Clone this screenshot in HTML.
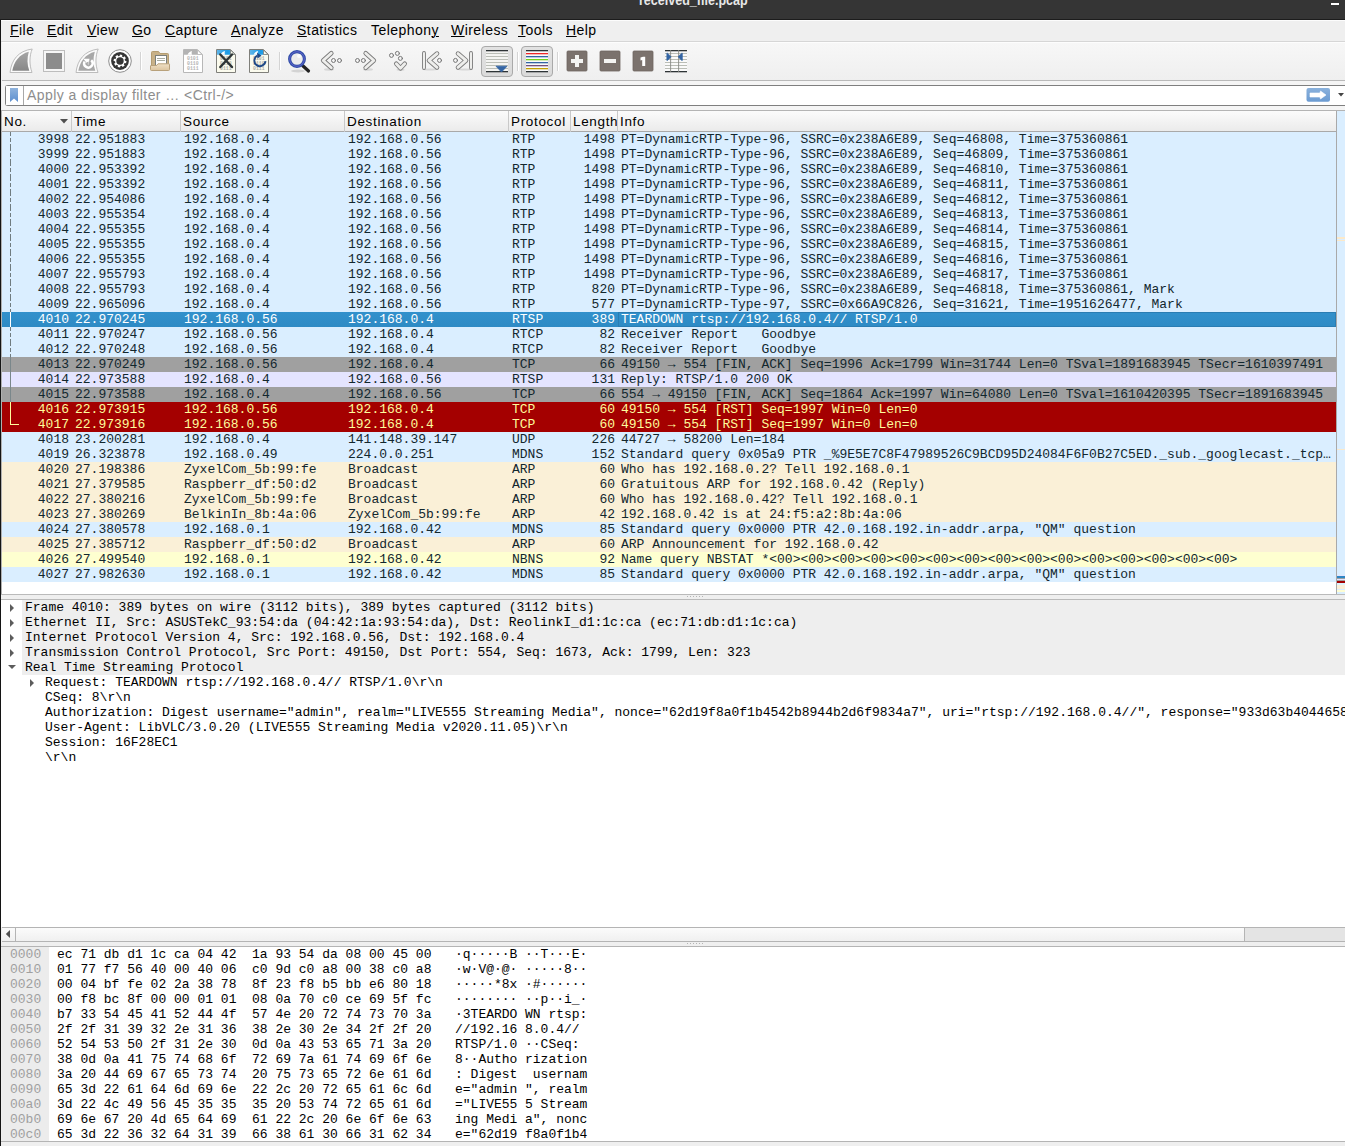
<!DOCTYPE html><html><head><meta charset="utf-8"><style>*{box-sizing:border-box;margin:0;padding:0}
html,body{width:1345px;height:1146px;overflow:hidden}
body{position:relative;background:#efefef;font-family:"Liberation Sans",sans-serif;color:#000}
.abs{position:absolute}
#titlebar{position:absolute;left:0;top:0;width:1345px;height:20px;background:#353535;border-bottom:1px solid #1c1c1c;overflow:hidden}
#title{position:absolute;left:639px;top:-9px;font:bold 15px "Liberation Sans",sans-serif;color:#e8e8e8;white-space:nowrap;letter-spacing:0px;transform:scaleX(0.835);transform-origin:0 0}
#minbtn{position:absolute;left:1331px;top:3px;width:8px;height:2px;background:#fff}
#leftedge{position:absolute;left:0;top:20px;width:1px;height:1126px;background:#141414}
#leftw{position:absolute;left:1px;top:20px;width:1px;height:1126px;background:#fbfbfb}
#menubar{position:absolute;left:1px;top:20px;width:1344px;height:22px;background:#efefef;border-top:1px solid #fcfcfc;border-bottom:1px solid #d6d6d6}
.mi{position:absolute;top:1px;font-size:14px;letter-spacing:0.45px;color:#000;white-space:nowrap}
.mi u{text-decoration:underline;text-decoration-thickness:1px;text-underline-offset:0.5px}
#toolbar{position:absolute;left:2px;top:42px;width:1343px;height:39px;background:linear-gradient(#f7f7f7,#efefef);border-top:1px solid #fdfdfd;border-bottom:1px solid #b9b9b9}
.sep{position:absolute;width:1px;height:18px;background:#d0d0d0;border-right:1px solid #fff}
#filterbar{position:absolute;left:2px;top:81px;width:1343px;height:29px;background:#f5f5f5}
#fbox{position:absolute;left:5px;top:85px;width:1340px;height:21px;background:#fff;border:1px solid #7f7f7f;border-right:none;border-radius:3px 0 0 3px}
#fbm{position:absolute;left:6px;top:86px;width:18px;height:19px;border-right:1px solid #a8a8a8;background:#fff}
#fph{position:absolute;left:27px;top:87px;font-size:14px;letter-spacing:0.43px;color:#8d8d8d;white-space:nowrap}
#plframe{position:absolute;left:1px;top:110px;width:1344px;height:485px;background:#fff;border-top:1px solid #b4b4b4;border-bottom:1px solid #bababa;border-left:1px solid #b0b0b0}
#phead{position:absolute;left:2px;top:111px;width:1334px;height:21px;background:linear-gradient(#fbfbfb,#ebebeb);border-bottom:1px solid #a9a9a9}
.hc{position:absolute;top:0;height:21px;border-right:1px solid #c9c9c9;font-size:13.5px;letter-spacing:0.66px;line-height:21px;padding-left:2px;white-space:nowrap;overflow:hidden;color:#000}
#plist{position:absolute;left:2px;top:132px;width:1334px;height:450px;overflow:hidden;font-family:"Liberation Mono",monospace;font-size:13px}
.row{position:absolute;left:0;width:1334px;height:15px;line-height:15px;color:#12272e;white-space:nowrap}
.row .c{position:absolute;top:0;white-space:pre;overflow:hidden}
.udp{background:#daeeff}
.sel{background:linear-gradient(#3291cc,#2e8ac4);color:#fff}
.fin{background:#a0a0a0}
.rtspc{background:#e4e4ff}
.rst{background:#a40000;color:#fffc9c}
.arp{background:#faf0d7}
.nbns{background:#feffd0}
.c.no{left:0;width:67px;text-align:right}
.c.tm{left:73px}
.c.src{left:182px}
.c.dst{left:346px}
.c.pr{left:510px}
.c.ln{left:568px;width:45px;text-align:right}
.c.info{left:619px;width:712px;text-overflow:ellipsis}
#vscroll{position:absolute;left:1336px;top:111px;width:9px;height:483px;background:#daeeff;border-left:1px solid #a9a9a9}
#splitter1{position:absolute;left:1px;top:594px;width:1344px;height:6px;background:#efefef;border-top:1px solid #bababa;border-bottom:1px solid #bababa}
#dpane{position:absolute;left:1px;top:600px;width:1344px;height:327px;background:#fff}
#dtree{position:absolute;left:2px;top:600px;width:1343px;height:327px;overflow:hidden;font-family:"Liberation Mono",monospace;font-size:13px}
.drow{position:absolute;left:0;width:1343px;height:15px;line-height:15px;white-space:pre;color:#000}
.drow.top{background:#eeeeee;left:20px}
.drow.top .dt{position:absolute;left:3px}
.drow.child .dt{position:absolute;left:43px}
.tri{position:absolute;width:0;height:0}
.top .tri.r{left:-12px;top:4px;border-left:4px solid #5c5c5c;border-top:4px solid transparent;border-bottom:4px solid transparent}
.top .tri.d{left:-14px;top:5px;border-top:4px solid #5c5c5c;border-left:4px solid transparent;border-right:4px solid transparent}
.child .tri.r{left:28px;top:4px;border-left:4px solid #5c5c5c;border-top:4px solid transparent;border-bottom:4px solid transparent}
#hscroll{position:absolute;left:2px;top:927px;width:1343px;height:15px;background:#e4e4e4;border-top:1px solid #b4b4b4;border-bottom:1px solid #b4b4b4}
#hthumb{position:absolute;left:15px;top:928px;width:1230px;height:13px;background:linear-gradient(#fbfbfb,#f0f0f0);border-left:1px solid #b4b4b4;border-right:1px solid #b4b4b4}
#harrow{position:absolute;left:2px;top:928px;width:13px;height:13px;background:linear-gradient(#fbfbfb,#f0f0f0)}
#splitter2{position:absolute;left:1px;top:942px;width:1344px;height:5px;background:#efefef;border-bottom:1px solid #b4b4b4}
#hexp{position:absolute;left:2px;top:947px;width:1343px;height:194px;background:#fff;overflow:hidden;font-family:"Liberation Mono",monospace;font-size:13px}
.offcol{position:absolute;left:0;top:0;width:47px;height:195px;background:#ececec}
.hrow{position:absolute;left:0;height:15px;line-height:15px;white-space:nowrap;color:#000;width:1343px}
.hrow span{position:absolute;top:0;white-space:pre}
.off{left:8px;color:#a0a0a0}
.h1{left:55px}
.h2{left:250px}
.a1{left:453px}
.a2{left:523px}
#bottomstrip{position:absolute;left:1px;top:1141px;width:1344px;height:5px;background:#efefef;border-top:1px solid #b4b4b4}
.tl{position:absolute;left:8px;top:0;width:1px;height:15px}
.tl.dash{background:repeating-linear-gradient(to bottom,#707c80 0,#707c80 4px,transparent 4px,transparent 6px,#707c80 6px,#707c80 10px,transparent 10px,transparent 12px,#707c80 12px,#707c80 15px)}
.tl.solid{background:#7a878b}
.tl.lend{height:8px;width:9px;border-left:1px solid #fffc9c;border-bottom:1px solid #fffc9c}
.focus{position:absolute;left:616px;top:0;width:718px;height:15px;border:1px solid #2a7db3}
</style></head><body>
<div id="titlebar"><div id="title">received_file.pcap</div><div id="minbtn"></div></div>
<div id="menubar">
<span class="mi" style="left:9px"><u>F</u>ile</span>
<span class="mi" style="left:46px"><u>E</u>dit</span>
<span class="mi" style="left:86px"><u>V</u>iew</span>
<span class="mi" style="left:131px"><u>G</u>o</span>
<span class="mi" style="left:164px"><u>C</u>apture</span>
<span class="mi" style="left:230px"><u>A</u>nalyze</span>
<span class="mi" style="left:296px"><u>S</u>tatistics</span>
<span class="mi" style="left:370px">Telephon<u>y</u></span>
<span class="mi" style="left:450px"><u>W</u>ireless</span>
<span class="mi" style="left:517px"><u>T</u>ools</span>
<span class="mi" style="left:565px"><u>H</u>elp</span>
</div>
<div id="leftedge"></div>
<div id="toolbar"></div>
<svg id="tbsvg" style="position:absolute;left:0;top:0" width="700" height="82" viewBox="0 0 700 82">
<defs>
<linearGradient id="finL" x1="0" y1="0" x2="0" y2="1"><stop offset="0" stop-color="#a6a6a6"/><stop offset="1" stop-color="#878787"/></linearGradient>
<linearGradient id="btnG" x1="0" y1="0" x2="0" y2="1"><stop offset="0" stop-color="#e2e2e2"/><stop offset="1" stop-color="#dadada"/></linearGradient>
<linearGradient id="fold1" x1="0" y1="0" x2="0" y2="1"><stop offset="0" stop-color="#efe0c6"/><stop offset="1" stop-color="#dcc49e"/></linearGradient>
<linearGradient id="blueband" x1="0" y1="0" x2="1" y2="0"><stop offset="0" stop-color="#5fb5e8"/><stop offset="0.6" stop-color="#1c9be6"/><stop offset="1" stop-color="#3aa8e8"/></linearGradient>
<linearGradient id="arrowbtn" x1="0" y1="0" x2="0" y2="1"><stop offset="0" stop-color="#86afdc"/><stop offset="1" stop-color="#6f9fd4"/></linearGradient>
</defs>
<!-- fin 1 -->
<path d="M10,72.5 C11.5,60 18,51 32.2,49 C29.5,55.5 29,64 32,72.5 Z" fill="#fbfbfb" stroke="#bcbcbc" stroke-width="1"/>
<path d="M12.3,70.8 C14,61.5 19.5,54 28.8,51.7 C27,58 27,64.5 29.3,70.8 Z" fill="url(#finL)"/>
<!-- stop -->
<rect x="43.5" y="50.5" width="21" height="21" fill="#f6f6f6" stroke="#bdbdbd"/>
<rect x="46" y="53" width="16" height="16" fill="#8c8c8c"/>
<!-- fin 2 restart -->
<path d="M76,72.5 C77.5,60 84,51 98.2,49 C95.5,55.5 95,64 98,72.5 Z" fill="#fbfbfb" stroke="#bcbcbc" stroke-width="1"/>
<path d="M78.3,70.8 C80,61.5 85.5,54 94.8,51.7 C93,58 93,64.5 95.3,70.8 Z" fill="#a8a8a8"/>
<path d="M84.6,61.5 A4.2,4.2 0 1 0 91.2,60.2" fill="none" stroke="#fff" stroke-width="2.5"/>
<path d="M83.3,58.8 L89.5,58.8 L88.6,65.2 Z" fill="#fff"/>
<path d="M86.6,62.6 L88.4,65.8 L88.6,61.6 Z" fill="#a8a8a8"/>
<!-- gear -->
<circle cx="120" cy="61" r="11.3" fill="#fff" stroke="#8e8e8e" stroke-width="1"/>
<circle cx="120" cy="61" r="8.9" fill="#353535"/>
<path d="M124.99,60.65 L126.50,60.89 L126.07,63.33 L124.57,63.03 L123.77,64.28 L124.68,65.52 L122.64,66.94 L121.79,65.67 L120.35,65.99 L120.11,67.50 L117.67,67.07 L117.97,65.57 L116.72,64.77 L115.48,65.68 L114.06,63.64 L115.33,62.79 L115.01,61.35 L113.50,61.11 L113.93,58.67 L115.43,58.97 L116.23,57.72 L115.32,56.48 L117.36,55.06 L118.21,56.33 L119.65,56.01 L119.89,54.50 L122.33,54.93 L122.03,56.43 L123.28,57.23 L124.52,56.32 L125.94,58.36 L124.67,59.21 Z" fill="#fff"/>
<circle cx="120" cy="61" r="3.7" fill="#353535"/>
<!-- sep -->
<rect x="140" y="52" width="1" height="18" fill="#d4d4d4"/><rect x="141" y="52" width="1" height="18" fill="#fff"/>
<!-- folder -->
<path d="M151.5,66 L151.5,52.5 Q151.5,51.5 152.5,51.5 L158.5,51.5 L160,53.5 L167.5,53.5 Q168.5,53.5 168.5,54.5 L168.5,66 Z" fill="#c8b188" stroke="#b49d72"/>
<rect x="155.5" y="55.5" width="11" height="10" fill="#fff" stroke="#7b7f7b"/>
<rect x="157" y="58" width="8" height="1" fill="#a8aca0"/><rect x="157" y="60" width="8" height="1" fill="#a8aca0"/>
<path d="M150.5,69.5 L150.5,66 Q150.5,65.5 151,65.5 L156.5,65.5 L158,63.8 L169,63.8 Q169.5,63.8 169.5,64.3 L169.5,69.5 Q169.5,70.5 168.5,70.5 L151.5,70.5 Q150.5,70.5 150.5,69.5 Z" fill="url(#fold1)" stroke="#b8a17b"/>
<!-- file gray -->
<path d="M183.5,49.5 L197.5,49.5 L202.5,54.5 L202.5,72.5 L183.5,72.5 Z" fill="#fff" stroke="#b7b7b7"/>
<path d="M184,50 L197.3,50 L201.8,54.8 L184,54.8 Z" fill="#b3b3b3"/>
<path d="M187.5,54.8 C188.5,52.5 190,51.3 192,51 C191.5,52.5 191.6,53.5 192,54.8 Z" fill="#fff"/>
<path d="M197.5,50 L197.5,54.5 L202,54.5 Z" fill="#fff" stroke="#b7b7b7" stroke-width="0.8"/>
<g fill="#b4b4b4" font-family="Liberation Mono" font-size="4.8" font-weight="bold"><text x="187" y="60">0101</text><text x="187" y="65">0110</text><text x="187" y="70">0111</text></g>
<!-- file close -->
<path d="M216.5,49.5 L230.5,49.5 L235.5,54.5 L235.5,72.5 L216.5,72.5 Z" fill="#fbfbee" stroke="#7f7f7a"/>
<path d="M217,50 L230.3,50 L234.8,54.8 L217,54.8 Z" fill="url(#blueband)"/>
<path d="M220.5,54.8 C221.5,52.5 223,51.3 225,51 C224.5,52.5 224.6,53.5 225,54.8 Z" fill="#fff"/>
<path d="M230.5,50 L230.5,54.5 L235,54.5 Z" fill="#fbfbee" stroke="#7f7f7a" stroke-width="0.8"/>
<g fill="#aeaea6" font-family="Liberation Mono" font-size="4.8" font-weight="bold"><text x="220" y="60">0101</text><text x="220" y="65">0110</text><text x="220" y="70">0111</text></g>
<path d="M220.3,54.5 L232,67 M232,54.5 L220.3,67" stroke="#2e3436" stroke-width="2.4" stroke-linecap="round"/>
<!-- file reload -->
<path d="M249.5,49.5 L263.5,49.5 L268.5,54.5 L268.5,72.5 L249.5,72.5 Z" fill="#fbfbee" stroke="#7f7f7a"/>
<path d="M250,50 L263.3,50 L267.8,54.8 L250,54.8 Z" fill="url(#blueband)"/>
<path d="M253.5,54.8 C254.5,52.5 256,51.3 258,51 C257.5,52.5 257.6,53.5 258,54.8 Z" fill="#fff"/>
<path d="M263.5,50 L263.5,54.5 L268,54.5 Z" fill="#fbfbee" stroke="#7f7f7a" stroke-width="0.8"/>
<g fill="#aeaea6" font-family="Liberation Mono" font-size="4.8" font-weight="bold"><text x="253" y="60">0101</text><text x="253" y="65">0110</text><text x="253" y="70">0111</text></g>
<path d="M257.5,55.5 A5.6,5.6 0 1 0 265.5,61.2" fill="none" stroke="#204a87" stroke-width="1.9"/>
<path d="M257,52.8 L261.5,55.5 L257.5,58.5 Z" fill="#204a87"/>
<!-- sep -->
<rect x="279" y="52" width="1" height="18" fill="#d4d4d4"/><rect x="280" y="52" width="1" height="18" fill="#fff"/>
<!-- magnifier -->
<ellipse cx="298" cy="71" rx="7" ry="1.5" fill="#000" opacity="0.12"/>
<path d="M302.8,65.8 L308.5,71" stroke="#222" stroke-width="3.2" stroke-linecap="round"/>
<circle cx="297" cy="59" r="7.4" fill="#ececec" stroke="#2f4ea6" stroke-width="3.1"/>
<circle cx="297" cy="59" r="7.3" fill="none" stroke="#6d68d6" stroke-width="0.9" opacity="0.9"/>
<circle cx="299" cy="56" r="2" fill="#fff" opacity="0.8"/>
<!-- back --><g fill="#000" opacity="0.10"><ellipse cx="329" cy="69.5" rx="5" ry="1.2"/><ellipse cx="368" cy="69.5" rx="5" ry="1.2"/><ellipse cx="400.5" cy="69.8" rx="4" ry="1.1"/><ellipse cx="430" cy="69.5" rx="7" ry="1.1"/><ellipse cx="465" cy="69.5" rx="7" ry="1.1"/></g>
<g fill="none" stroke-linecap="round" stroke-linejoin="round">
<path d="M331.3,53.3 L323.2,60.5 L331.3,67.7" stroke="#7a7a7a" stroke-width="4.6"/>
<path d="M331.3,53.3 L323.2,60.5 L331.3,67.7" stroke="#eeeeec" stroke-width="2.8"/>
<circle cx="333.5" cy="60.5" r="2" stroke="#777" stroke-width="1"/>
<circle cx="339.5" cy="60.5" r="2" stroke="#777" stroke-width="1"/>
<!-- forward -->
<path d="M365.7,53.3 L373.8,60.5 L365.7,67.7" stroke="#7a7a7a" stroke-width="4.6"/>
<path d="M365.7,53.3 L373.8,60.5 L365.7,67.7" stroke="#eeeeec" stroke-width="2.8"/>
<circle cx="363.4" cy="60.5" r="2" stroke="#777" stroke-width="1"/>
<circle cx="357.5" cy="60.5" r="2" stroke="#777" stroke-width="1"/>
<!-- goto -->
<circle cx="391.5" cy="55.4" r="2" stroke="#777" stroke-width="1"/>
<circle cx="397.4" cy="53.4" r="2" stroke="#777" stroke-width="1"/>
<circle cx="400.4" cy="58.4" r="2" stroke="#777" stroke-width="1"/>
<path d="M396.3,63.8 L400.5,68.3 L404.7,63.8" stroke="#7a7a7a" stroke-width="4.6"/>
<path d="M396.3,63.8 L400.5,68.3 L404.7,63.8" stroke="#eeeeec" stroke-width="2.8"/>
<!-- first -->
<path d="M424,53 L424,68" stroke="#7a7a7a" stroke-width="3.8"/>
<path d="M424,53 L424,68" stroke="#eeeeec" stroke-width="2"/>
<path d="M437,53.6 L429,60.4 L437,67.4" stroke="#7a7a7a" stroke-width="4.6"/>
<path d="M437,53.6 L429,60.4 L437,67.4" stroke="#eeeeec" stroke-width="2.8"/>
<circle cx="439.5" cy="60.4" r="2" stroke="#777" stroke-width="1"/>
<!-- last -->
<path d="M471,53 L471,68" stroke="#7a7a7a" stroke-width="3.8"/>
<path d="M471,53 L471,68" stroke="#eeeeec" stroke-width="2"/>
<path d="M458,53.6 L466,60.4 L458,67.4" stroke="#7a7a7a" stroke-width="4.6"/>
<path d="M458,53.6 L466,60.4 L458,67.4" stroke="#eeeeec" stroke-width="2.8"/>
<circle cx="455.5" cy="60.4" r="2" stroke="#777" stroke-width="1"/>
</g>
<!-- autoscroll button -->
<rect x="481.5" y="46.5" width="31" height="30" rx="3.5" fill="url(#btnG)" stroke="#a9a9a9"/>
<rect x="486" y="50" width="22" height="22" fill="#f4f4f2"/>
<g fill="#babdb6"><rect x="486" y="53" width="22" height="1"/><rect x="486" y="56" width="22" height="1"/><rect x="486" y="59" width="22" height="1"/><rect x="486" y="62" width="22" height="1"/><rect x="486" y="65" width="22" height="1"/><rect x="486" y="68" width="22" height="1"/></g>
<rect x="486" y="50" width="22" height="1.3" fill="#2e3436"/><rect x="486" y="71" width="22" height="1.3" fill="#2e3436"/>
<path d="M496,66.2 L507,66.2 L501.5,72 Z" fill="#3465a4" stroke="#3465a4" stroke-width="0.8" stroke-linejoin="round"/>
<rect x="517" y="52" width="1" height="19" fill="#d4d4d4"/><rect x="518" y="52" width="1" height="19" fill="#fff"/>
<!-- colorize button -->
<rect x="521.5" y="46.5" width="31" height="30" rx="3.5" fill="url(#btnG)" stroke="#a9a9a9"/>
<rect x="526" y="50" width="22" height="22" fill="#fafafa"/>
<rect x="526" y="50" width="22" height="1.3" fill="#2e3436"/>
<rect x="526" y="53" width="22" height="1.3" fill="#ef2929"/>
<rect x="526" y="56" width="22" height="1.3" fill="#3465a4"/>
<rect x="526" y="59" width="22" height="1.3" fill="#73d216"/>
<rect x="526" y="62" width="22" height="1.3" fill="#3465a4"/>
<rect x="526" y="65" width="22" height="1.3" fill="#75507b"/>
<rect x="526" y="68" width="22" height="1.3" fill="#c4a000"/>
<rect x="526" y="71" width="22" height="1.3" fill="#2e3436"/>
<rect x="557" y="52" width="1" height="19" fill="#d4d4d4"/><rect x="558" y="52" width="1" height="19" fill="#fff"/>
<!-- zoom in/out/normal -->
<rect x="567" y="51" width="20" height="20" rx="1" fill="#7b726d" stroke="#6f6661" stroke-width="0.8"/>
<rect x="575" y="55" width="4" height="12" fill="#f4f4f2"/><rect x="571" y="59" width="12" height="4" fill="#f4f4f2"/>
<rect x="600" y="51" width="20" height="20" rx="1" fill="#7b726d" stroke="#6f6661" stroke-width="0.8"/>
<rect x="604" y="59" width="12" height="4" fill="#f4f4f2"/>
<rect x="633" y="51" width="20" height="20" rx="1" fill="#7b726d" stroke="#6f6661" stroke-width="0.8"/>
<path d="M640.5,57.5 L643,56.7 L645.2,56.7 L645.2,66 L642.2,66 L642.2,60 L640.5,60.5 Z" fill="#fff"/>
<!-- resize columns -->
<rect x="665" y="50" width="22" height="22" fill="#fafafa"/>
<g fill="#babdb6"><rect x="665" y="53" width="22" height="1"/><rect x="665" y="56" width="22" height="1"/><rect x="665" y="59" width="22" height="1"/><rect x="665" y="62" width="22" height="1"/><rect x="665" y="65" width="22" height="1"/><rect x="665" y="68" width="22" height="1"/></g>
<rect x="665" y="50" width="22" height="1.3" fill="#2e3436"/><rect x="665" y="71" width="22" height="1.3" fill="#2e3436"/>
<rect x="670.2" y="50" width="0.9" height="22" fill="#888a85"/><rect x="678.2" y="50" width="0.9" height="22" fill="#888a85"/>
<path d="M666.8,53.2 L667.5,53.2 L671.2,56.8 L667.5,60.4 L666.8,60.4 Z" fill="#3465a4" stroke="#3465a4" stroke-width="0.6" stroke-linejoin="round"/>
<path d="M682.4,53.2 L681.7,53.2 L678,56.8 L681.7,60.4 L682.4,60.4 Z" fill="#3465a4" stroke="#3465a4" stroke-width="0.6" stroke-linejoin="round"/>
</svg>


<div id="filterbar"></div>
<div id="fbox"></div><div id="fbm"></div>
<svg style="position:absolute;left:0;top:80px" width="1345" height="30" viewBox="0 80 1345 30">
<defs><linearGradient id="bmg" x1="0" y1="0" x2="0" y2="1"><stop offset="0" stop-color="#8fb3dd"/><stop offset="1" stop-color="#5d8fcf"/></linearGradient></defs>
<path d="M10,88 L18,88 L18,102 L14,98.5 L10,102 Z" fill="url(#bmg)"/>
<rect x="1306.5" y="88" width="23.5" height="13.8" rx="2" fill="url(#arrowbtn2)"/>
<linearGradient id="arrowbtn2" x1="0" y1="0" x2="0" y2="1"><stop offset="0" stop-color="#8ab1dc"/><stop offset="1" stop-color="#6b9bd2"/></linearGradient>
<path d="M1310,93 L1320,93 L1320.5,91 L1326,95 L1320.5,99 L1320,97 L1310,97 Z" fill="#fff" stroke="#fff" stroke-width="0.6" stroke-linejoin="round"/>
<path d="M1338,93 L1344,93 L1341,96.5 Z" fill="#444"/>
</svg>
<div id="fph">Apply a display filter … &lt;Ctrl-/&gt;</div>
<div id="plframe"></div>
<div id="phead">
<div class="hc" style="left:0;width:70px">No.<svg style="position:absolute;left:58px;top:8px" width="8" height="5"><path d="M0,0 L8,0 L4,4.5 Z" fill="#505050"/></svg></div>
<div class="hc" style="left:70px;width:109px">Time</div>
<div class="hc" style="left:179px;width:164px">Source</div>
<div class="hc" style="left:343px;width:164px">Destination</div>
<div class="hc" style="left:507px;width:62px">Protocol</div>
<div class="hc" style="left:569px;width:47px">Length</div>
<div class="hc" style="left:616px;width:718px;border-right:none">Info</div>
</div>
<div id="vscroll"></div><div style="position:absolute;left:1337px;top:237px;width:8px;height:2px;background:#fce9c9"></div><div style="position:absolute;left:1337px;top:240px;width:8px;height:1px;background:#fce9c9"></div><div style="position:absolute;left:1337px;top:449px;width:8px;height:1px;background:#fae9cc"></div><div style="position:absolute;left:1337px;top:575px;width:8px;height:1px;background:#e6e4fd"></div><div style="position:absolute;left:1337px;top:576px;width:8px;height:2px;background:#2f86c4"></div><div style="position:absolute;left:1337px;top:578px;width:8px;height:1px;background:#9aa0a3"></div><div style="position:absolute;left:1337px;top:579px;width:8px;height:1px;background:#e6e4fd"></div><div style="position:absolute;left:1337px;top:580px;width:8px;height:1px;background:#a0a0a0"></div><div style="position:absolute;left:1337px;top:581px;width:8px;height:2px;background:#a40000"></div><div style="position:absolute;left:1337px;top:583px;width:8px;height:2px;background:#dcf4ff"></div><div style="position:absolute;left:1337px;top:585px;width:8px;height:4px;background:#faefd8"></div><div style="position:absolute;left:1337px;top:589px;width:8px;height:1px;background:#daeeff"></div><div style="position:absolute;left:1337px;top:590px;width:8px;height:2px;background:#fdfdd3"></div><div style="position:absolute;left:1337px;top:592px;width:8px;height:1px;background:#daeeff"></div>
<div id="splitter1"></div>
<div id="dpane"></div>
<div id="hscroll"></div><div id="harrow"></div><div id="hthumb"></div>
<div id="splitter2"></div>
<svg style="position:absolute;left:0;top:590px" width="1345" height="360" viewBox="0 590 1345 360">
<path d="M10,930 L10,938 L5.8,934 Z" fill="#505050"/>
<g fill="#b4b4b4"><rect x="687" y="596" width="1" height="1"/><rect x="690" y="596" width="1" height="1"/><rect x="693" y="596" width="1" height="1"/><rect x="696" y="596" width="1" height="1"/><rect x="699" y="596" width="1" height="1"/><rect x="702" y="596" width="1" height="1"/>
<rect x="687" y="943" width="1" height="1"/><rect x="690" y="943" width="1" height="1"/><rect x="693" y="943" width="1" height="1"/><rect x="696" y="943" width="1" height="1"/><rect x="699" y="943" width="1" height="1"/><rect x="702" y="943" width="1" height="1"/></g>
</svg>
<div id="bottomstrip"></div>

<div id="plist">
<div class="row udp" style="top:0px"><i class="tl dash"></i><span class="c no">3998</span><span class="c tm">22.951883</span><span class="c src">192.168.0.4</span><span class="c dst">192.168.0.56</span><span class="c pr">RTP</span><span class="c ln">1498</span><span class="c info">PT=DynamicRTP-Type-96, SSRC=0x238A6E89, Seq=46808, Time=375360861</span></div>
<div class="row udp" style="top:15px"><i class="tl dash"></i><span class="c no">3999</span><span class="c tm">22.951883</span><span class="c src">192.168.0.4</span><span class="c dst">192.168.0.56</span><span class="c pr">RTP</span><span class="c ln">1498</span><span class="c info">PT=DynamicRTP-Type-96, SSRC=0x238A6E89, Seq=46809, Time=375360861</span></div>
<div class="row udp" style="top:30px"><i class="tl dash"></i><span class="c no">4000</span><span class="c tm">22.953392</span><span class="c src">192.168.0.4</span><span class="c dst">192.168.0.56</span><span class="c pr">RTP</span><span class="c ln">1498</span><span class="c info">PT=DynamicRTP-Type-96, SSRC=0x238A6E89, Seq=46810, Time=375360861</span></div>
<div class="row udp" style="top:45px"><i class="tl dash"></i><span class="c no">4001</span><span class="c tm">22.953392</span><span class="c src">192.168.0.4</span><span class="c dst">192.168.0.56</span><span class="c pr">RTP</span><span class="c ln">1498</span><span class="c info">PT=DynamicRTP-Type-96, SSRC=0x238A6E89, Seq=46811, Time=375360861</span></div>
<div class="row udp" style="top:60px"><i class="tl dash"></i><span class="c no">4002</span><span class="c tm">22.954086</span><span class="c src">192.168.0.4</span><span class="c dst">192.168.0.56</span><span class="c pr">RTP</span><span class="c ln">1498</span><span class="c info">PT=DynamicRTP-Type-96, SSRC=0x238A6E89, Seq=46812, Time=375360861</span></div>
<div class="row udp" style="top:75px"><i class="tl dash"></i><span class="c no">4003</span><span class="c tm">22.955354</span><span class="c src">192.168.0.4</span><span class="c dst">192.168.0.56</span><span class="c pr">RTP</span><span class="c ln">1498</span><span class="c info">PT=DynamicRTP-Type-96, SSRC=0x238A6E89, Seq=46813, Time=375360861</span></div>
<div class="row udp" style="top:90px"><i class="tl dash"></i><span class="c no">4004</span><span class="c tm">22.955355</span><span class="c src">192.168.0.4</span><span class="c dst">192.168.0.56</span><span class="c pr">RTP</span><span class="c ln">1498</span><span class="c info">PT=DynamicRTP-Type-96, SSRC=0x238A6E89, Seq=46814, Time=375360861</span></div>
<div class="row udp" style="top:105px"><i class="tl dash"></i><span class="c no">4005</span><span class="c tm">22.955355</span><span class="c src">192.168.0.4</span><span class="c dst">192.168.0.56</span><span class="c pr">RTP</span><span class="c ln">1498</span><span class="c info">PT=DynamicRTP-Type-96, SSRC=0x238A6E89, Seq=46815, Time=375360861</span></div>
<div class="row udp" style="top:120px"><i class="tl dash"></i><span class="c no">4006</span><span class="c tm">22.955355</span><span class="c src">192.168.0.4</span><span class="c dst">192.168.0.56</span><span class="c pr">RTP</span><span class="c ln">1498</span><span class="c info">PT=DynamicRTP-Type-96, SSRC=0x238A6E89, Seq=46816, Time=375360861</span></div>
<div class="row udp" style="top:135px"><i class="tl dash"></i><span class="c no">4007</span><span class="c tm">22.955793</span><span class="c src">192.168.0.4</span><span class="c dst">192.168.0.56</span><span class="c pr">RTP</span><span class="c ln">1498</span><span class="c info">PT=DynamicRTP-Type-96, SSRC=0x238A6E89, Seq=46817, Time=375360861</span></div>
<div class="row udp" style="top:150px"><i class="tl dash"></i><span class="c no">4008</span><span class="c tm">22.955793</span><span class="c src">192.168.0.4</span><span class="c dst">192.168.0.56</span><span class="c pr">RTP</span><span class="c ln">820</span><span class="c info">PT=DynamicRTP-Type-96, SSRC=0x238A6E89, Seq=46818, Time=375360861, Mark</span></div>
<div class="row udp" style="top:165px"><i class="tl dash"></i><span class="c no">4009</span><span class="c tm">22.965096</span><span class="c src">192.168.0.4</span><span class="c dst">192.168.0.56</span><span class="c pr">RTP</span><span class="c ln">577</span><span class="c info">PT=DynamicRTP-Type-97, SSRC=0x66A9C826, Seq=31621, Time=1951626477, Mark</span></div>
<div class="row sel" style="top:180px"><i class="tl solid" style="background:#fff"></i><i class="focus"></i><span class="c no">4010</span><span class="c tm">22.970245</span><span class="c src">192.168.0.56</span><span class="c dst">192.168.0.4</span><span class="c pr">RTSP</span><span class="c ln">389</span><span class="c info">TEARDOWN rtsp://192.168.0.4// RTSP/1.0</span></div>
<div class="row udp" style="top:195px"><i class="tl dash"></i><span class="c no">4011</span><span class="c tm">22.970247</span><span class="c src">192.168.0.56</span><span class="c dst">192.168.0.4</span><span class="c pr">RTCP</span><span class="c ln">82</span><span class="c info">Receiver Report   Goodbye</span></div>
<div class="row udp" style="top:210px"><i class="tl dash"></i><span class="c no">4012</span><span class="c tm">22.970248</span><span class="c src">192.168.0.56</span><span class="c dst">192.168.0.4</span><span class="c pr">RTCP</span><span class="c ln">82</span><span class="c info">Receiver Report   Goodbye</span></div>
<div class="row fin" style="top:225px"><i class="tl solid"></i><span class="c no">4013</span><span class="c tm">22.970249</span><span class="c src">192.168.0.56</span><span class="c dst">192.168.0.4</span><span class="c pr">TCP</span><span class="c ln">66</span><span class="c info">49150 → 554 [FIN, ACK] Seq=1996 Ack=1799 Win=31744 Len=0 TSval=1891683945 TSecr=1610397491</span></div>
<div class="row rtspc" style="top:240px"><i class="tl solid"></i><span class="c no">4014</span><span class="c tm">22.973588</span><span class="c src">192.168.0.4</span><span class="c dst">192.168.0.56</span><span class="c pr">RTSP</span><span class="c ln">131</span><span class="c info">Reply: RTSP/1.0 200 OK</span></div>
<div class="row fin" style="top:255px"><i class="tl solid"></i><span class="c no">4015</span><span class="c tm">22.973588</span><span class="c src">192.168.0.4</span><span class="c dst">192.168.0.56</span><span class="c pr">TCP</span><span class="c ln">66</span><span class="c info">554 → 49150 [FIN, ACK] Seq=1864 Ack=1997 Win=64080 Len=0 TSval=1610420395 TSecr=1891683945</span></div>
<div class="row rst" style="top:270px"><i class="tl solid" style="background:#fffc9c"></i><span class="c no">4016</span><span class="c tm">22.973915</span><span class="c src">192.168.0.56</span><span class="c dst">192.168.0.4</span><span class="c pr">TCP</span><span class="c ln">60</span><span class="c info">49150 → 554 [RST] Seq=1997 Win=0 Len=0</span></div>
<div class="row rst" style="top:285px"><i class="tl lend"></i><span class="c no">4017</span><span class="c tm">22.973916</span><span class="c src">192.168.0.56</span><span class="c dst">192.168.0.4</span><span class="c pr">TCP</span><span class="c ln">60</span><span class="c info">49150 → 554 [RST] Seq=1997 Win=0 Len=0</span></div>
<div class="row udp" style="top:300px"><span class="c no">4018</span><span class="c tm">23.200281</span><span class="c src">192.168.0.4</span><span class="c dst">141.148.39.147</span><span class="c pr">UDP</span><span class="c ln">226</span><span class="c info">44727 → 58200 Len=184</span></div>
<div class="row udp" style="top:315px"><span class="c no">4019</span><span class="c tm">26.323878</span><span class="c src">192.168.0.49</span><span class="c dst">224.0.0.251</span><span class="c pr">MDNS</span><span class="c ln">152</span><span class="c info">Standard query 0x05a9 PTR _%9E5E7C8F47989526C9BCD95D24084F6F0B27C5ED._sub._googlecast._tcp…</span></div>
<div class="row arp" style="top:330px"><span class="c no">4020</span><span class="c tm">27.198386</span><span class="c src">ZyxelCom_5b:99:fe</span><span class="c dst">Broadcast</span><span class="c pr">ARP</span><span class="c ln">60</span><span class="c info">Who has 192.168.0.2? Tell 192.168.0.1</span></div>
<div class="row arp" style="top:345px"><span class="c no">4021</span><span class="c tm">27.379585</span><span class="c src">Raspberr_df:50:d2</span><span class="c dst">Broadcast</span><span class="c pr">ARP</span><span class="c ln">60</span><span class="c info">Gratuitous ARP for 192.168.0.42 (Reply)</span></div>
<div class="row arp" style="top:360px"><span class="c no">4022</span><span class="c tm">27.380216</span><span class="c src">ZyxelCom_5b:99:fe</span><span class="c dst">Broadcast</span><span class="c pr">ARP</span><span class="c ln">60</span><span class="c info">Who has 192.168.0.42? Tell 192.168.0.1</span></div>
<div class="row arp" style="top:375px"><span class="c no">4023</span><span class="c tm">27.380269</span><span class="c src">BelkinIn_8b:4a:06</span><span class="c dst">ZyxelCom_5b:99:fe</span><span class="c pr">ARP</span><span class="c ln">42</span><span class="c info">192.168.0.42 is at 24:f5:a2:8b:4a:06</span></div>
<div class="row udp" style="top:390px"><span class="c no">4024</span><span class="c tm">27.380578</span><span class="c src">192.168.0.1</span><span class="c dst">192.168.0.42</span><span class="c pr">MDNS</span><span class="c ln">85</span><span class="c info">Standard query 0x0000 PTR 42.0.168.192.in-addr.arpa, "QM" question</span></div>
<div class="row arp" style="top:405px"><span class="c no">4025</span><span class="c tm">27.385712</span><span class="c src">Raspberr_df:50:d2</span><span class="c dst">Broadcast</span><span class="c pr">ARP</span><span class="c ln">60</span><span class="c info">ARP Announcement for 192.168.0.42</span></div>
<div class="row nbns" style="top:420px"><span class="c no">4026</span><span class="c tm">27.499540</span><span class="c src">192.168.0.1</span><span class="c dst">192.168.0.42</span><span class="c pr">NBNS</span><span class="c ln">92</span><span class="c info">Name query NBSTAT *&lt;00&gt;&lt;00&gt;&lt;00&gt;&lt;00&gt;&lt;00&gt;&lt;00&gt;&lt;00&gt;&lt;00&gt;&lt;00&gt;&lt;00&gt;&lt;00&gt;&lt;00&gt;&lt;00&gt;&lt;00&gt;&lt;00&gt;</span></div>
<div class="row udp" style="top:435px"><span class="c no">4027</span><span class="c tm">27.982630</span><span class="c src">192.168.0.1</span><span class="c dst">192.168.0.42</span><span class="c pr">MDNS</span><span class="c ln">85</span><span class="c info">Standard query 0x0000 PTR 42.0.168.192.in-addr.arpa, "QM" question</span></div>
</div>
<div id="dtree">
<div class="drow top" style="top:0px"><span class="tri r"></span><span class="dt">Frame 4010: 389 bytes on wire (3112 bits), 389 bytes captured (3112 bits)</span></div>
<div class="drow top" style="top:15px"><span class="tri r"></span><span class="dt">Ethernet II, Src: ASUSTekC_93:54:da (04:42:1a:93:54:da), Dst: ReolinkI_d1:1c:ca (ec:71:db:d1:1c:ca)</span></div>
<div class="drow top" style="top:30px"><span class="tri r"></span><span class="dt">Internet Protocol Version 4, Src: 192.168.0.56, Dst: 192.168.0.4</span></div>
<div class="drow top" style="top:45px"><span class="tri r"></span><span class="dt">Transmission Control Protocol, Src Port: 49150, Dst Port: 554, Seq: 1673, Ack: 1799, Len: 323</span></div>
<div class="drow top" style="top:60px"><span class="tri d"></span><span class="dt">Real Time Streaming Protocol</span></div>
<div class="drow child" style="top:75px"><span class="tri r"></span><span class="dt">Request: TEARDOWN rtsp://192.168.0.4// RTSP/1.0\r\n</span></div>
<div class="drow child" style="top:90px"><span class="dt">CSeq: 8\r\n</span></div>
<div class="drow child" style="top:105px"><span class="dt">Authorization: Digest username="admin", realm="LIVE555 Streaming Media", nonce="62d19f8a0f1b4542b8944b2d6f9834a7", uri="rtsp://192.168.0.4//", response="933d63b4044658</span></div>
<div class="drow child" style="top:120px"><span class="dt">User-Agent: LibVLC/3.0.20 (LIVE555 Streaming Media v2020.11.05)\r\n</span></div>
<div class="drow child" style="top:135px"><span class="dt">Session: 16F28EC1</span></div>
<div class="drow child" style="top:150px"><span class="dt">\r\n</span></div>
</div>
<div id="hexp"><div class="offcol"></div>
<div class="hrow" style="top:0px"><span class="off">0000</span><span class="h1">ec 71 db d1 1c ca 04 42</span><span class="h2">1a 93 54 da 08 00 45 00</span><span class="a1">·q·····B</span><span class="a2">··T···E·</span></div>
<div class="hrow" style="top:15px"><span class="off">0010</span><span class="h1">01 77 f7 56 40 00 40 06</span><span class="h2">c0 9d c0 a8 00 38 c0 a8</span><span class="a1">·w·V@·@·</span><span class="a2">·····8··</span></div>
<div class="hrow" style="top:30px"><span class="off">0020</span><span class="h1">00 04 bf fe 02 2a 38 78</span><span class="h2">8f 23 f8 b5 bb e6 80 18</span><span class="a1">·····*8x</span><span class="a2">·#······</span></div>
<div class="hrow" style="top:45px"><span class="off">0030</span><span class="h1">00 f8 bc 8f 00 00 01 01</span><span class="h2">08 0a 70 c0 ce 69 5f fc</span><span class="a1">········</span><span class="a2">··p··i_·</span></div>
<div class="hrow" style="top:60px"><span class="off">0040</span><span class="h1">b7 33 54 45 41 52 44 4f</span><span class="h2">57 4e 20 72 74 73 70 3a</span><span class="a1">·3TEARDO</span><span class="a2">WN rtsp:</span></div>
<div class="hrow" style="top:75px"><span class="off">0050</span><span class="h1">2f 2f 31 39 32 2e 31 36</span><span class="h2">38 2e 30 2e 34 2f 2f 20</span><span class="a1">//192.16</span><span class="a2">8.0.4// </span></div>
<div class="hrow" style="top:90px"><span class="off">0060</span><span class="h1">52 54 53 50 2f 31 2e 30</span><span class="h2">0d 0a 43 53 65 71 3a 20</span><span class="a1">RTSP/1.0</span><span class="a2">··CSeq: </span></div>
<div class="hrow" style="top:105px"><span class="off">0070</span><span class="h1">38 0d 0a 41 75 74 68 6f</span><span class="h2">72 69 7a 61 74 69 6f 6e</span><span class="a1">8··Autho</span><span class="a2">rization</span></div>
<div class="hrow" style="top:120px"><span class="off">0080</span><span class="h1">3a 20 44 69 67 65 73 74</span><span class="h2">20 75 73 65 72 6e 61 6d</span><span class="a1">: Digest</span><span class="a2"> usernam</span></div>
<div class="hrow" style="top:135px"><span class="off">0090</span><span class="h1">65 3d 22 61 64 6d 69 6e</span><span class="h2">22 2c 20 72 65 61 6c 6d</span><span class="a1">e="admin</span><span class="a2">", realm</span></div>
<div class="hrow" style="top:150px"><span class="off">00a0</span><span class="h1">3d 22 4c 49 56 45 35 35</span><span class="h2">35 20 53 74 72 65 61 6d</span><span class="a1">="LIVE55</span><span class="a2">5 Stream</span></div>
<div class="hrow" style="top:165px"><span class="off">00b0</span><span class="h1">69 6e 67 20 4d 65 64 69</span><span class="h2">61 22 2c 20 6e 6f 6e 63</span><span class="a1">ing Medi</span><span class="a2">a", nonc</span></div>
<div class="hrow" style="top:180px"><span class="off">00c0</span><span class="h1">65 3d 22 36 32 64 31 39</span><span class="h2">66 38 61 30 66 31 62 34</span><span class="a1">e="62d19</span><span class="a2">f8a0f1b4</span></div>
</div>
</body></html>
